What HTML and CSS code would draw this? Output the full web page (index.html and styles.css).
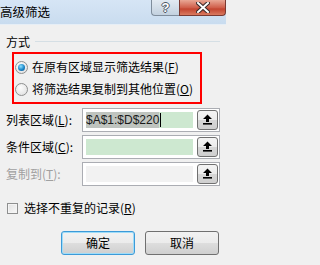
FILE: index.html
```html
<!DOCTYPE html>
<html lang="zh-CN">
<head>
<meta charset="utf-8">
<link rel="stylesheet" href="styles.css">
</head>
<body>
<div class="win">
  <div class="titlebar">
    <span class="title">高级筛选</span>
    <div class="caps">
      <span class="cap help">?</span>
      <span class="cap close">
        <svg width="14" height="11" viewBox="0 0 14 11"><path d="M2 1 L12 10 M12 1 L2 10" stroke="#3a2a2a" stroke-width="4" stroke-linecap="square"/><path d="M2 1 L12 10 M12 1 L2 10" stroke="#fff" stroke-width="2" stroke-linecap="square"/></svg>
      </span>
    </div>
  </div>
  <div class="body">
    <div class="group-head"><span class="gtext">方式</span><span class="gline"></span></div>
    <div class="redbox">
      <div class="radio-row"><span class="radio on"></span><span>在原有区域显示筛选结果(<u>F</u>)</span></div>
      <div class="radio-row"><span class="radio"></span><span>将筛选结果复制到其他位置(<u>O</u>)</span></div>
    </div>
    <div class="rows">
      <div class="row">
        <span class="lbl">列表区域(<u>L</u>):</span>
        <div class="field">
          <div class="val"><span class="sel">$A$1:$D$220</span><span class="caret"></span></div>
          <span class="pick"><svg width="11" height="11" viewBox="0 0 11 11"><path d="M5.5 0.5 L10 5 L7 5 L7 8 L4 8 L4 5 L1 5 Z" fill="#000"/><rect x="1" y="9" width="9" height="1.6" fill="#000"/></svg></span>
        </div>
      </div>
      <div class="row">
        <span class="lbl">条件区域(<u>C</u>):</span>
        <div class="field">
          <div class="val"></div>
          <span class="pick"><svg width="11" height="11" viewBox="0 0 11 11"><path d="M5.5 0.5 L10 5 L7 5 L7 8 L4 8 L4 5 L1 5 Z" fill="#000"/><rect x="1" y="9" width="9" height="1.6" fill="#000"/></svg></span>
        </div>
      </div>
      <div class="row">
        <span class="lbl dis">复制到(<u>T</u>):</span>
        <div class="field">
          <div class="val off"></div>
          <span class="pick"><svg width="11" height="11" viewBox="0 0 11 11"><path d="M5.5 0.5 L10 5 L7 5 L7 8 L4 8 L4 5 L1 5 Z" fill="#000"/><rect x="1" y="9" width="9" height="1.6" fill="#000"/></svg></span>
        </div>
      </div>
    </div>
    <div class="check-row"><span class="check"></span><span>选择不重复的记录(<u>R</u>)</span></div>
    <div class="btns">
      <span class="btn def">确定</span>
      <span class="btn">取消</span>
    </div>
  </div>
</div>
</body>
</html>
```
FILE: styles.css
```css
html, body {
  margin: 0;
  padding: 0;
}
body {
  width: 226px;
  height: 265px;
  overflow: hidden;
  background: #f0f0f0;
  font-family: "Liberation Sans", "Noto Sans CJK SC", sans-serif;
  font-size: 12px;
  color: #000;
}
.win {
  width: 226px;
  height: 265px;
  display: flex;
  flex-direction: column;
}
.titlebar {
  height: 24px;
  flex: none;
  background: linear-gradient(#d6e5f5, #c9dcef);
  border-bottom: 1px solid #e6eef6;
  display: flex;
  align-items: flex-start;
}
.title {
  font-family: "Noto Sans CJK SC", sans-serif;
  font-size: 12.5px;
  line-height: 14px;
  margin-top: 5px;
  color: #000;
}
.caps {
  margin-left: auto;
  display: flex;
}
.cap {
  height: 16px;
  display: flex;
  align-items: center;
  justify-content: center;
  box-sizing: border-box;
}
.help {
  width: 28px;
  border: 1px solid #7f8d9c;
  border-top: none;
  border-right: none;
  border-radius: 0 0 0 4px;
  background: linear-gradient(#e2eaf2, #c3d1df);
  color: #fff;
  font-family: "Liberation Sans", sans-serif;
  font-weight: bold;
  font-size: 13px;
  text-shadow: -1px 0 #4a5866, 1px 0 #4a5866, 0 -1px #4a5866, 0 1px #4a5866;
}
.close {
  width: 47px;
  border: 1px solid #7a3a32;
  border-top: none;
  border-radius: 0 0 4px 0;
  background: linear-gradient(#e9a795, #d0604c 50%, #c34530 60%, #d97a60);
}
.body {
  flex: 1;
  display: flex;
  flex-direction: column;
  padding-top: 10px;
}
.group-head {
  display: flex;
  align-items: center;
  height: 14px;
  padding-left: 6px;
}
.gtext {
  font-family: "Noto Sans CJK SC", sans-serif;
  line-height: 14px;
}
.gline {
  flex: 1;
  height: 1px;
  background: #d5dfe5;
  margin-left: 5px;
  margin-right: 6px;
  margin-top: -1px;
}
.redbox {
  margin-top: 3px;
  margin-left: 12px;
  width: 190px;
  box-sizing: border-box;
  border: 2px solid #ff0000;
  padding: 2px 0 2px 1px;
  display: flex;
  flex-direction: column;
}
.radio-row {
  height: 22px;
  display: flex;
  align-items: center;
  gap: 4px;
  font-family: "Noto Sans CJK SC", sans-serif;
  line-height: 14px;
  white-space: nowrap;
}
.radio {
  width: 13px;
  height: 13px;
  box-sizing: border-box;
  border-radius: 50%;
  border: 1px solid #8e8f8f;
  background: radial-gradient(circle at 40% 35%, #fdfdfd, #dcdcdc);
  display: flex;
  align-items: center;
  justify-content: center;
}
.radio.on::after {
  content: "";
  width: 7px;
  height: 7px;
  border-radius: 50%;
  background: radial-gradient(circle at 40% 35%, #8fe0ff, #1a86c8 55%, #0a4a80);
}
.rows {
  margin-top: 4px;
  display: flex;
  flex-direction: column;
  gap: 3px;
}
.row {
  display: flex;
  align-items: center;
  padding-left: 6px;
}
.lbl {
  width: 76px;
  font-family: "Noto Sans CJK SC", sans-serif;
  line-height: 14px;
  white-space: nowrap;
}
.lbl.dis {
  color: #a0a0a0;
}
.field {
  width: 138px;
  height: 24px;
  box-sizing: border-box;
  border: 1px solid #abadb3;
  background: #fff;
  display: flex;
  align-items: center;
  padding: 1px 1px 1px 3px;
}
.val {
  flex: 1;
  height: 16px;
  background: #cde8d0;
  margin-right: 4px;
  display: flex;
  align-items: center;
}
.val.off {
  background: #f2f2f2;
}
.sel {
  background: #bfc4bf;
  height: 16px;
  line-height: 16px;
  font-family: "Liberation Sans", sans-serif;
  font-size: 12px;
  color: #1a1a1a;
}
.caret {
  width: 1px;
  height: 14px;
  background: #000;
  margin-left: 1px;
}
.pick {
  width: 21px;
  height: 20px;
  box-sizing: border-box;
  border: 1px solid #707070;
  border-radius: 3px;
  background: linear-gradient(#f4f4f4, #ebebeb 50%, #d6d6d6 52%, #cfcfcf);
  display: flex;
  align-items: center;
  justify-content: center;
}
.pick svg {
  margin-top: -1px;
}
.check-row {
  margin-top: 15px;
  height: 14px;
  padding-left: 7px;
  display: flex;
  align-items: center;
  gap: 6px;
  font-family: "Noto Sans CJK SC", sans-serif;
  line-height: 14px;
}
.check {
  width: 11px;
  height: 11px;
  box-sizing: border-box;
  border: 1px solid #8e8f8f;
  background: linear-gradient(135deg, #e2e2e2, #f8f8f8);
  box-shadow: inset 0 0 0 1px #f4f4f4;
}
.btns {
  margin-top: 16px;
  display: flex;
  padding-left: 61px;
  gap: 10px;
}
.btn {
  width: 74px;
  height: 24px;
  box-sizing: border-box;
  border: 1px solid #707070;
  border-radius: 3px;
  background: linear-gradient(#f2f2f2, #ebebeb 50%, #dddddd 52%, #cfcfcf);
  display: flex;
  align-items: center;
  justify-content: center;
  font-family: "Noto Sans CJK SC", sans-serif;
  line-height: 14px;
}
.btn.def {
  border-color: #3c9ad8;
  box-shadow: inset 0 0 0 1px #9fdcf8;
}
u {
  text-decoration: underline;
  text-underline-offset: 1px;
}
```
